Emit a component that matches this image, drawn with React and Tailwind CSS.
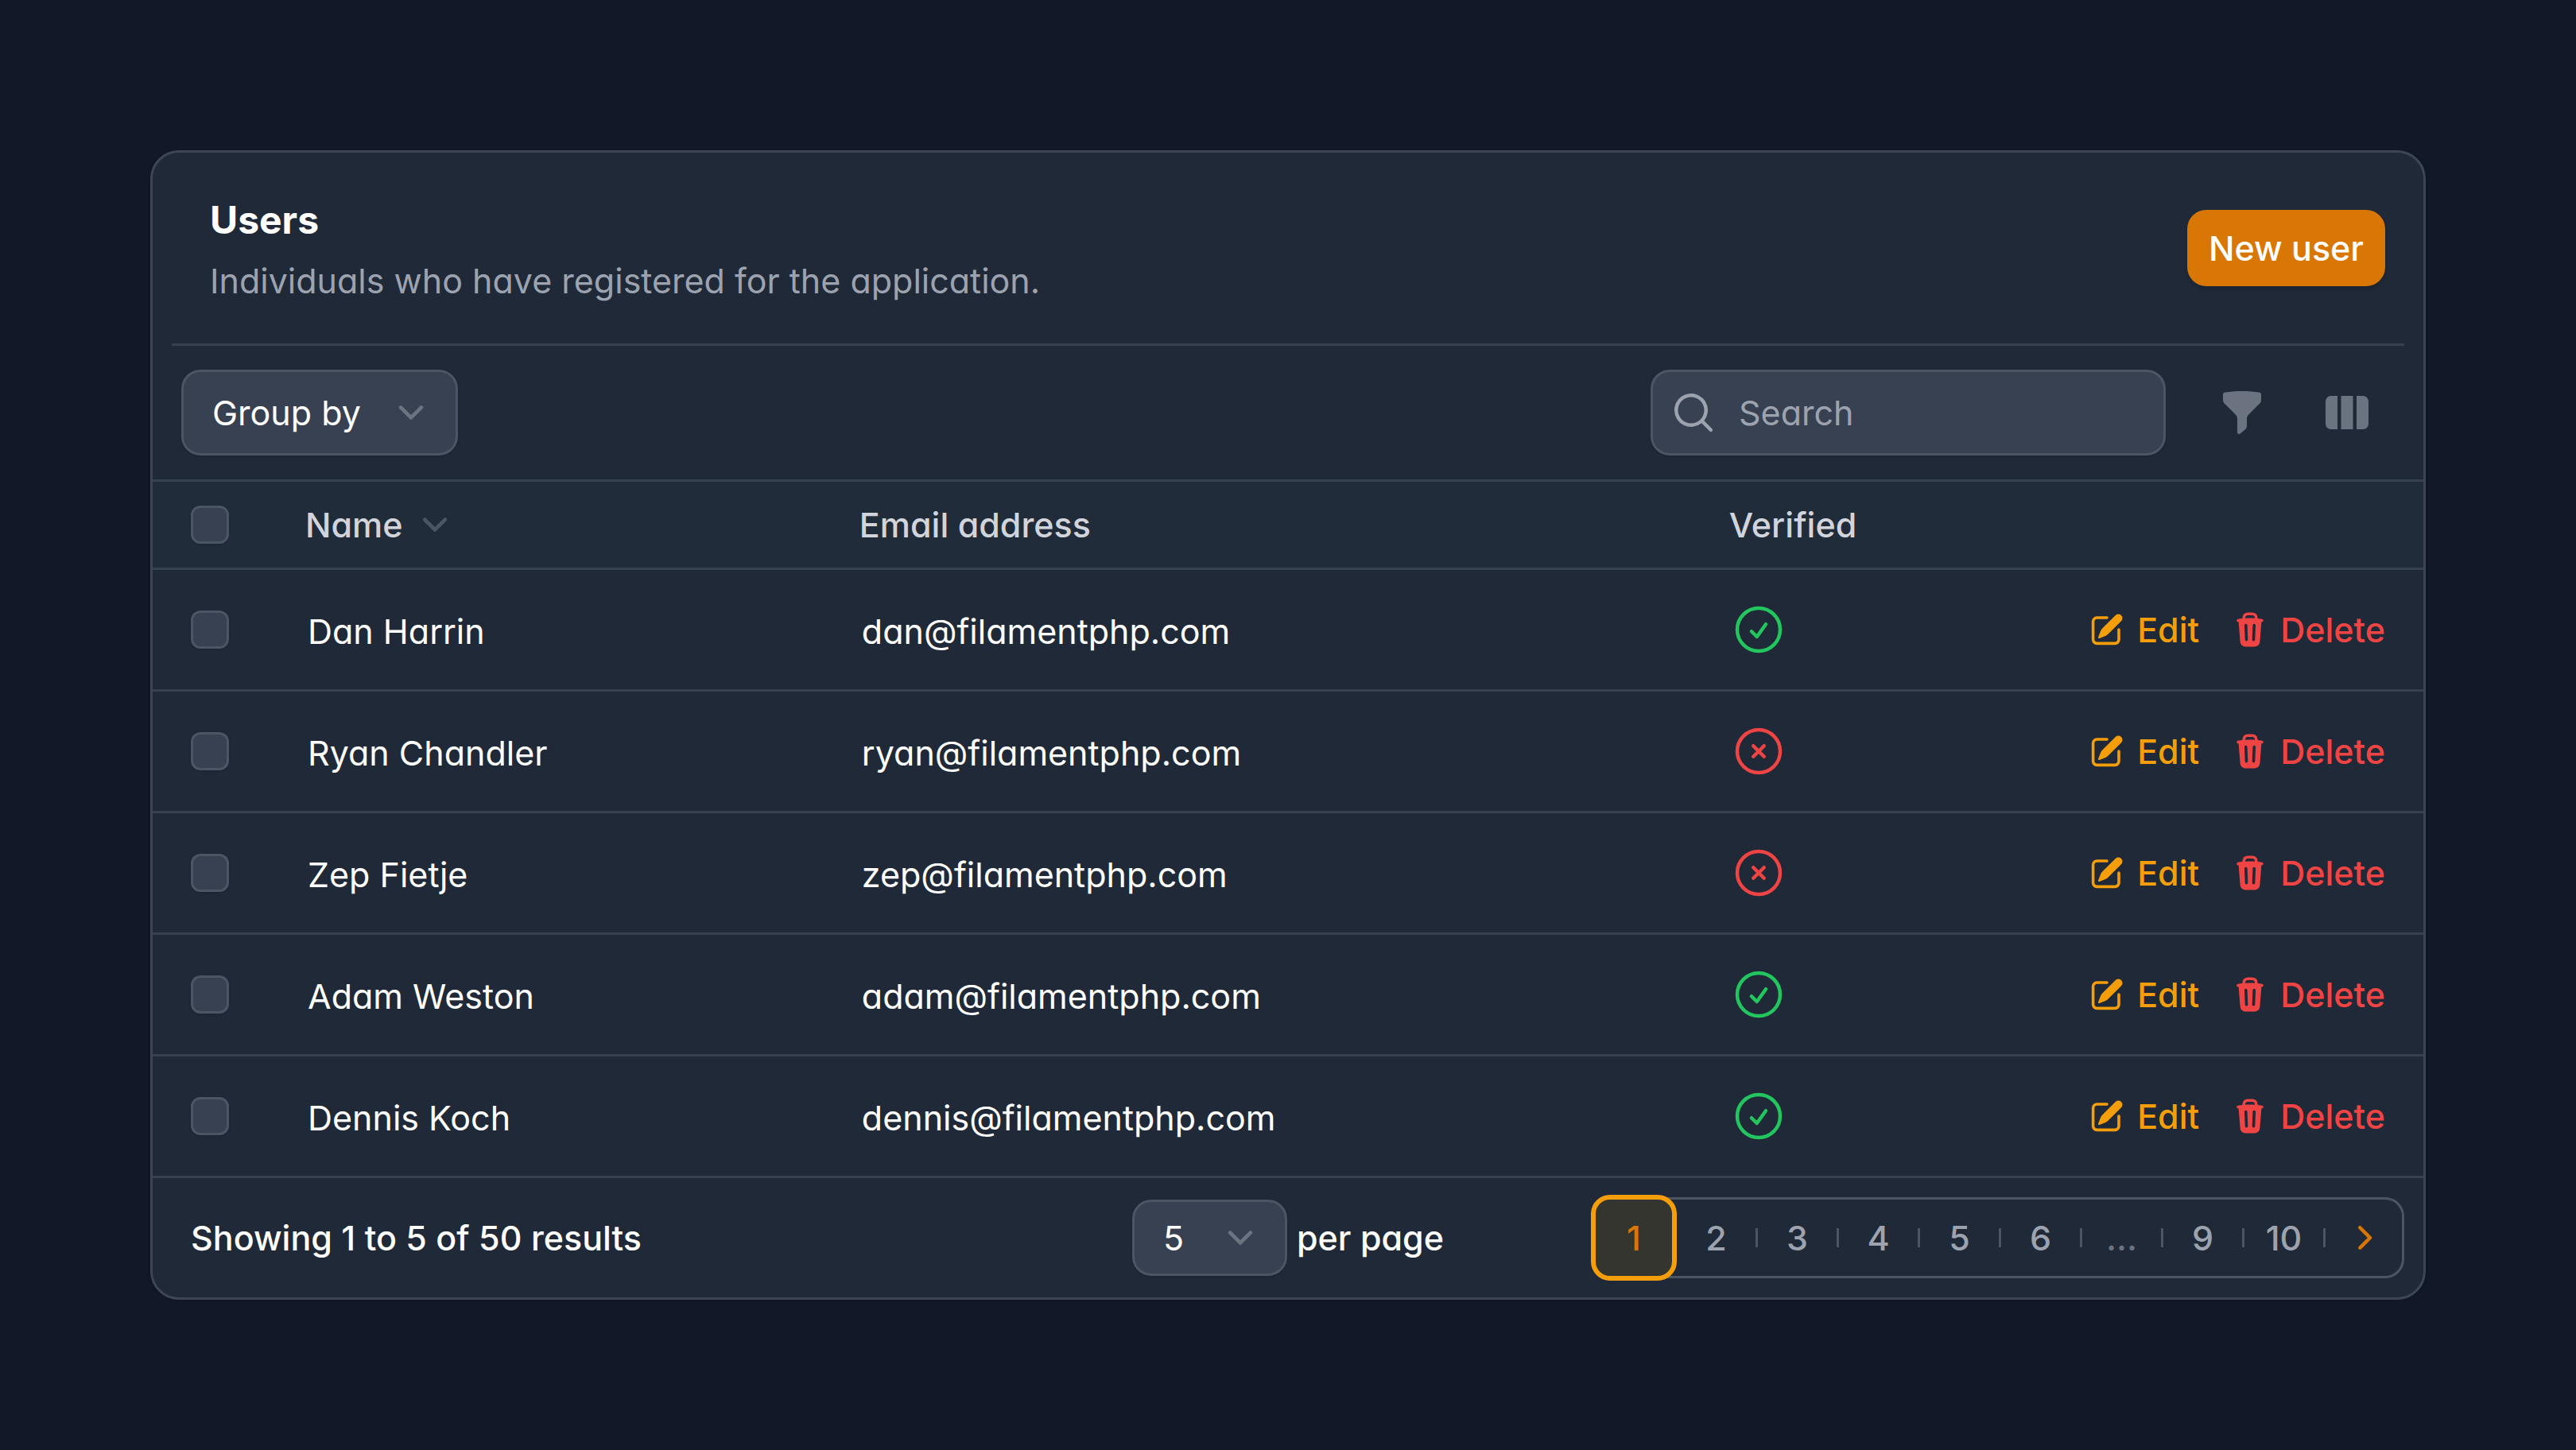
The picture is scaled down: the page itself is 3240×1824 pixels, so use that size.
import {
  HiMiniFunnel,
  HiMiniViewColumns,
  HiMiniMagnifyingGlass,
  HiMiniPencilSquare,
  HiMiniTrash,
  HiMiniChevronRight,
  HiOutlineCheckCircle,
  HiOutlineXCircle,
} from "react-icons/hi2";

const users = [
  { name: "Dan Harrin", email: "dan@filamentphp.com", verified: true },
  { name: "Ryan Chandler", email: "ryan@filamentphp.com", verified: false },
  { name: "Zep Fietje", email: "zep@filamentphp.com", verified: false },
  { name: "Adam Weston", email: "adam@filamentphp.com", verified: true },
  { name: "Dennis Koch", email: "dennis@filamentphp.com", verified: true },
];

const pages = ["2", "3", "4", "5", "6", "...", "9", "10"];

function Chevron({ className }) {
  return (
    <svg className={className} viewBox="0 0 20 20" fill="none" stroke="currentColor" strokeWidth="1.5" strokeLinecap="round" strokeLinejoin="round" aria-hidden="true">
      <path d="M6 8l4 4 4-4" />
    </svg>
  );
}

function Checkbox({ label }) {
  return (
    <input
      type="checkbox"
      aria-label={label}
      className="block size-12 appearance-none rounded-xl border-3 border-[#4b5563] bg-[#374151] shadow-sm checked:bg-[#d97706]"
    />
  );
}

function Select({ label, className, children }) {
  return (
    <div className="relative">
      <select
        aria-label={label}
        className={`block appearance-none rounded-3xl border-3 border-[#4b5563] bg-[#374151] pl-9 text-white shadow-sm ${className}`}
      >
        {children}
      </select>
      <Chevron className="pointer-events-none absolute top-1/2 right-[27px] size-16 -translate-y-1/2 text-[#6b7280]" />
    </div>
  );
}

export default function App() {
  return (
    <main className="min-h-screen bg-[#111827] p-[189px] font-['Inter',sans-serif] text-[43px] leading-[60px] text-white [font-feature-settings:'cv11']">
      <section className="overflow-hidden rounded-[36px] border-3 border-[#3f4653] bg-[#1f2937] shadow-sm">
        <header className="mx-6 flex h-[243px] items-center justify-between border-b-3 border-[#374151] pr-6 pl-12">
          <div className="pt-1.5">
            <h2 className="text-[48px] leading-[72px] font-bold">Users</h2>
            <p className="mt-1 leading-[72px] text-[#9ca3af]">Individuals who have registered for the application.</p>
          </div>
          <button type="button" className="h-24 rounded-3xl bg-[#d97706] px-[27px] font-medium shadow-md">
            New user
          </button>
        </header>

        <div className="flex h-[168px] items-center justify-between pr-[66px] pl-9">
          <Select label="Group by" className="h-27 w-[348px]">
            <option>Group by</option>
          </Select>
          <div className="flex items-center gap-[66px]">
            <div className="relative">
              <HiMiniMagnifyingGlass className="pointer-events-none absolute top-1/2 left-6 size-[60px] -translate-y-1/2 text-[#9ca3af]" />
              <input
                type="search"
                aria-label="Search"
                placeholder="Search"
                className="block h-27 w-[648px] rounded-3xl border-3 border-[#4b5563] bg-[#374151] pl-27 shadow-sm placeholder:text-[#9ca3af]"
              />
            </div>
            <div className="flex gap-[72px]">
              <button type="button" aria-label="Filter">
                <HiMiniFunnel className="size-[60px] text-[#6b7280]" />
              </button>
              <button type="button" aria-label="Toggle columns">
                <HiMiniViewColumns className="size-[60px] text-[#6b7280]" />
              </button>
            </div>
          </div>
        </div>

        <table className="w-full table-fixed border-separate border-spacing-0 text-left">
          <colgroup>
            <col className="w-36" />
            <col className="w-[24.4%]" />
            <col className="w-[38.3%]" />
            <col />
            <col className="w-[540px]" />
          </colgroup>
          <thead>
            <tr className="h-[111px] bg-[#212c3a] text-[#d1d5db] *:border-t-3 *:border-[#374151] *:p-0 *:font-medium">
              <th>
                <div className="pl-12"><Checkbox label="Select all users" /></div>
              </th>
              <th>
                <button type="button" className="flex items-center gap-2 pl-12">
                  Name
                  <Chevron className="size-16 text-[#4b5563]" />
                </button>
              </th>
              <th><span className="pl-12">Email address</span></th>
              <th><span className="pl-12">Verified</span></th>
              <th aria-label="Actions" />
            </tr>
          </thead>
          <tbody>
            {users.map((user) => (
              <tr key={user.email} className="h-[153px] *:border-t-3 *:border-[#374151]">
                <td className="pl-12"><Checkbox label={`Select ${user.name}`} /></td>
                <td className="pt-1 pl-[51px]">{user.name}</td>
                <td className="pt-1 pl-[51px]">{user.email}</td>
                <td className="pl-[49px]">
                  {user.verified ? (
                    <HiOutlineCheckCircle className="size-18 text-[#22c55e]" aria-label="Verified" />
                  ) : (
                    <HiOutlineXCircle className="size-18 text-[#ef4444]" aria-label="Not verified" />
                  )}
                </td>
                <td className="pr-12">
                  <div className="flex justify-end gap-10 font-medium">
                    <a href="#edit" className="flex items-center gap-3.5 text-[#f59e0b]">
                      <HiMiniPencilSquare className="size-12" />
                      Edit
                    </a>
                    <a href="#delete" className="flex items-center gap-3.5 text-[#ef4444]">
                      <HiMiniTrash className="size-12" />
                      Delete
                    </a>
                  </div>
                </td>
              </tr>
            ))}
          </tbody>
        </table>

        <footer className="grid h-[153px] grid-cols-[1fr_auto_1fr] items-center border-t-3 border-[#374151] px-6">
          <p className="pl-6 font-medium">Showing 1 to 5 of 50 results</p>
          <label className="flex items-center gap-3 font-medium">
            <Select label="Results per page" className="h-24 w-[195px] font-normal">
              <option>5</option>
            </Select>
            per page
          </label>
          <nav aria-label="Pagination" className="justify-self-end">
            <ol className="flex items-center rounded-3xl font-medium text-[#9ca3af] ring-3 ring-[#4b5563] ring-inset">
              <li className="-my-[3px] -ml-[3px]">
                <button type="button" aria-current="page" className="block h-27 w-27 rounded-3xl border-6 border-[#f59e0b] bg-[#34352f] text-[#d97706]">
                  1
                </button>
              </li>
              {pages.map((page) => (
                <li key={page} className="flex items-center">
                  {page === "..." ? (
                    <span className="w-[99px] text-center text-[#6b7280]">{page}</span>
                  ) : (
                    <button type="button" className="w-[99px]">{page}</button>
                  )}
                  <span className="h-6 w-[3px] bg-[#4b5563]" />
                </li>
              ))}
              <li>
                <button type="button" aria-label="Next page" className="flex h-[102px] w-[99px] items-center justify-center pr-1.5 text-[#d97706]">
                  <HiMiniChevronRight className="size-[60px]" />
                </button>
              </li>
            </ol>
          </nav>
        </footer>
      </section>
    </main>
  );
}
